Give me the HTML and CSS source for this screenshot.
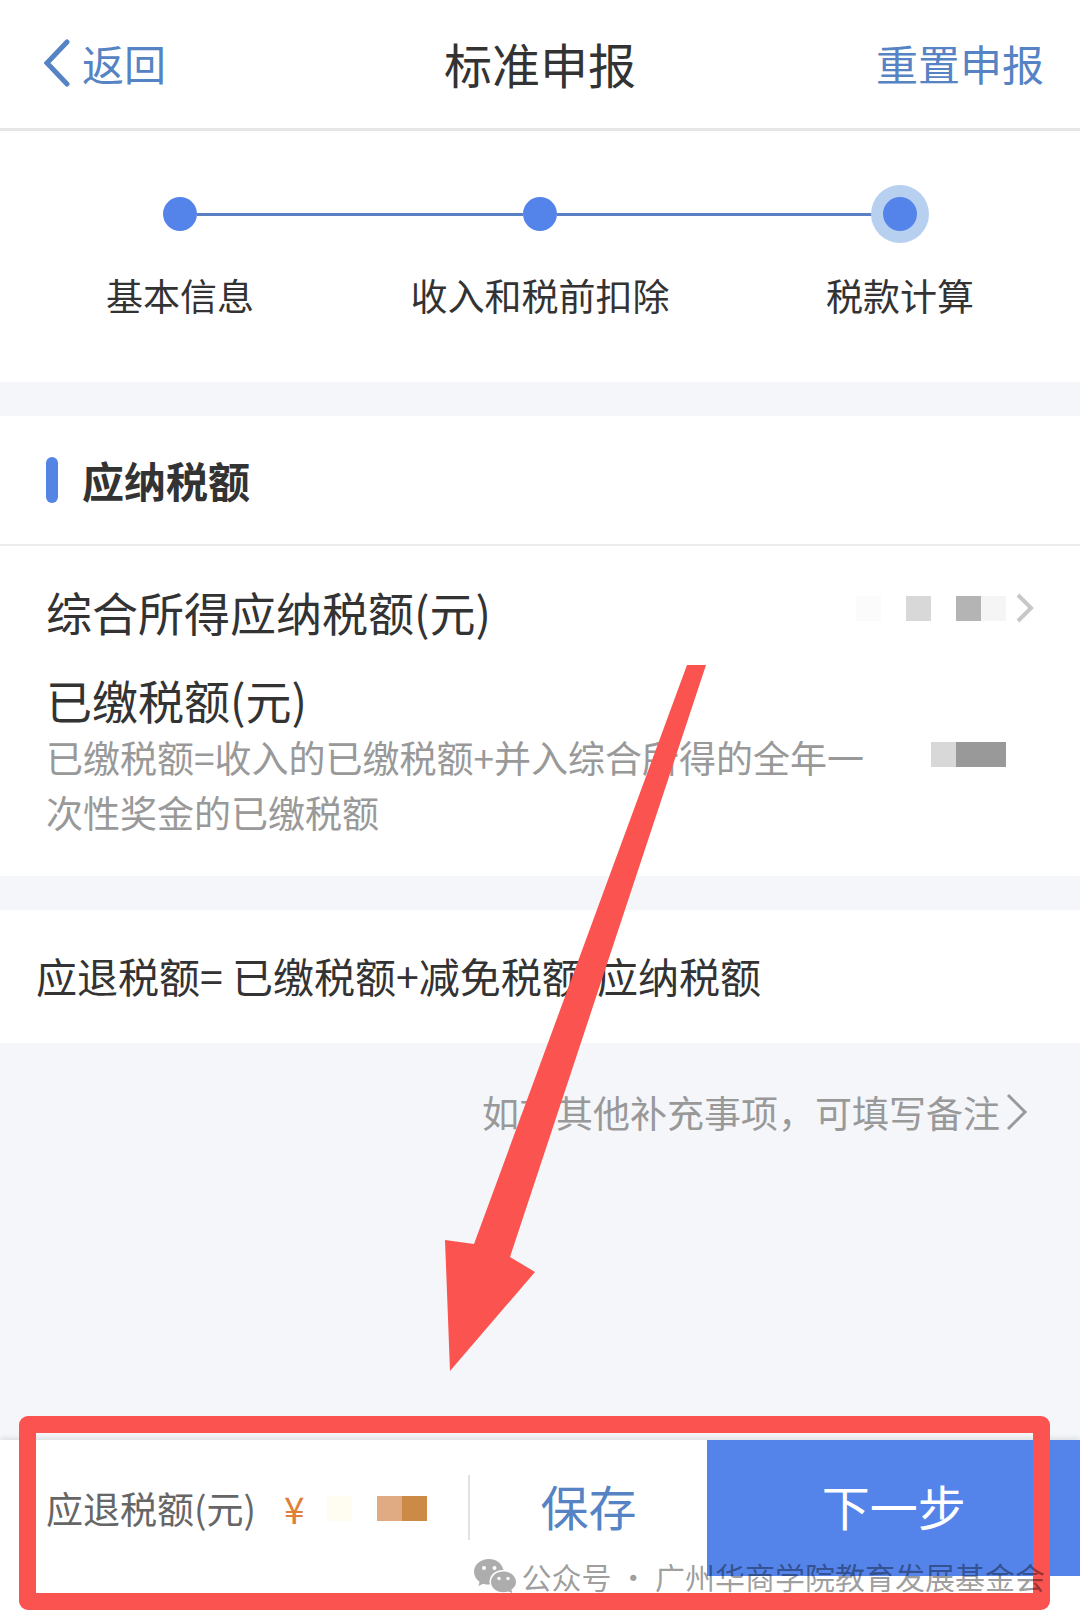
FILE: index.html
```html
<!DOCTYPE html>
<html lang="zh-CN">
<head>
  <meta charset="UTF-8" />
  <meta name="viewport" content="width=device-width, initial-scale=1.0"/>
  <title>标准申报</title>
  <link rel="stylesheet" href="styles.css">
</head>
<body>
<div class="page">
  <header class="topbar">
    <a class="back" href="#">
      <svg class="back-icon" viewBox="0 0 26 48" fill="none" aria-hidden="true"><path d="M23 3 L3 24 L23 45" stroke="currentColor" stroke-width="5" stroke-linecap="round"/></svg>
      返回
    </a>
    <h1>标准申报</h1>
    <a class="reset" href="#">重置申报</a>
  </header>

  <ol class="steps">
    <li><span class="track"><i class="dot"></i></span>基本信息</li>
    <li><span class="track"><i class="dot"></i></span>收入和税前扣除</li>
    <li class="current"><span class="track"><i class="dot"></i></span>税款计算</li>
  </ol>

  <main>
    <section class="card">
      <h2>应纳税额</h2>
      <div class="rows">
        <div class="row">
          <p class="name">综合所得应纳税额(元)</p>
          <span class="value">
            <i class="px g0"></i><i class="px"></i><i class="px g2"></i><i class="px"></i><i class="px g3"></i><i class="px g1"></i>
          </span>
          <svg class="chevron" viewBox="0 0 18 30" fill="none" aria-hidden="true"><path d="M2 2 L15 15 L2 28" stroke="currentColor" stroke-width="4"/></svg>
        </div>
        <div class="row paid">
          <div class="text">
            <p class="name">已缴税额(元)</p>
            <p class="desc">已缴税额=收入的已缴税额+并入综合所得的全年一次性奖金的已缴税额</p>
          </div>
          <span class="value"><i class="px g2"></i><i class="px g4"></i><i class="px g4"></i></span>
        </div>
      </div>
    </section>

    <section class="card formula">
      <p>应退税额= 已缴税额+减免税额-应纳税额</p>
    </section>

    <a class="remark" href="#">
      如有其他补充事项，可填写备注
      <svg class="remark-icon" viewBox="0 0 22 38" fill="none" aria-hidden="true"><path d="M2 2 L19 19 L2 36" stroke="currentColor" stroke-width="3"/></svg>
    </a>
  </main>

  <footer class="bottom">
    <div class="bar">
      <div class="refund">
        <span>应退税额(元)</span>
        <span class="yen">¥</span>
        <span class="amount"><i class="px o0"></i><i class="px"></i><i class="px o1"></i><i class="px o2"></i></span>
      </div>
      <button type="button" class="save">保存</button>
      <button type="button" class="next">下一步</button>
    </div>
    <div class="frame"></div>
    <div class="account">
      <svg class="wechat" viewBox="0 0 42 34" aria-hidden="true">
        <path d="M15 0 C6.500 0 0 5.600 0 12.800 C0 17 2.200 20.500 5.600 22.900 L4.400 27 L9.300 24.700 C11.500 25.400 13.600 25.600 15.900 25.500 C13.900 17.500 20.500 10.700 29.500 11 C28 4.400 22.200 0 15 0 Z"/>
        <path d="M29.500 12.500 C22.300 12.500 17 17.200 17 23 C17 28.900 22.300 33.300 29.500 33.300 C31.200 33.300 32.700 33.100 34.200 32.600 L38.300 34 L37.400 30.700 C40.300 28.800 42 26 42 23 C42 17.200 36.700 12.500 29.500 12.500 Z"/>
        <g fill="#fff"><circle cx="10" cy="9" r="2"/><circle cx="20.500" cy="9" r="2"/><circle cx="25" cy="19.500" r="1.700"/><circle cx="34" cy="19.500" r="1.700"/></g>
      </svg>
      <span>公众号 · 广州华商学院教育发展基金会</span>
    </div>
  </footer>

  <svg class="arrow" viewBox="0 0 261 706" aria-hidden="true"><path d="M242 0 H261 L65 592 L90 607 L5 706 L0 575 L29 579 Z"/></svg>
</div>
</body>
</html>
```

FILE: styles.css
```css
* {
  box-sizing: border-box;
}

body {
  margin: 0;
  font-family: "Noto Sans CJK SC", "Noto Sans", sans-serif;
  color: #333;
  background-color: #f5f6fa;
}

h1, h2, p, ol {
  margin: 0;
  padding: 0;
}

a {
  color: #5583c4;
  text-decoration: none;
}

svg {
  flex: none;
}

.page {
  position: relative;
  display: flex;
  flex-direction: column;
  min-height: 100vh;
}

/* top bar */
.topbar {
  display: grid;
  grid-template-columns: 1fr auto 1fr;
  align-items: center;
  padding: 31px 36px 33px;
  background: #fff;
  border-bottom: 3px solid #e6e6e6;
  font-size: 42px;
  line-height: 64px;
}

.topbar h1 {
  font-size: 48px;
  font-weight: 400;
}

.back {
  display: flex;
  align-items: center;
  gap: 12px;
  padding-left: 8px;
}

.back-icon {
  width: 26px;
  height: 48px;
}

.reset {
  text-align: right;
}

/* steps */
.steps {
  display: grid;
  grid-template-columns: repeat(3, 1fr);
  padding: 54px 0 60px;
  background: #fff;
  list-style: none;
  text-align: center;
  font-size: 37px;
  line-height: 54px;
}

.track {
  display: flex;
  align-items: center;
  height: 58px;
  margin-bottom: 25px;
}

.track::before,
.track::after {
  content: "";
  flex: 1;
  height: 3px;
  background: #5c80c4;
}

.steps li:first-child .track::before,
.steps li:last-child .track::after {
  background: none;
}

.dot {
  position: relative;
  width: 34px;
  height: 34px;
  border-radius: 50%;
  background: #5484ea;
}

.current .dot {
  box-shadow: 0 0 0 12px #b7d0f0;
}

/* cards */
.card {
  margin-top: 34px;
  background: #fff;
}

.card h2 {
  display: flex;
  align-items: center;
  gap: 24px;
  padding: 40px 46px;
  border-bottom: 2px solid #ededed;
  font-size: 42px;
  line-height: 48px;
}

.card h2::before {
  content: "";
  width: 12px;
  height: 46px;
  border-radius: 6px;
  background: #5484e4;
}

.rows {
  display: flex;
  flex-direction: column;
  gap: 26px;
  padding: 34px 46px 36px;
}

.row {
  display: flex;
  align-items: flex-start;
}

.name {
  flex: 1;
  font-size: 46px;
  line-height: 62px;
}

.value,
.amount {
  display: flex;
  align-items: center;
  justify-content: flex-end;
}

.value {
  height: 56px;
}

.px {
  width: 25px;
  height: 25px;
}

.g0 { background: #fbfbfb; }
.g1 { background: #f5f5f5; }
.g2 { background: #d8d8d8; }
.g3 { background: #b4b4b4; }
.g4 { background: #999; }

.chevron {
  width: 18px;
  height: 56px;
  margin-left: 10px;
  color: #c8c8c8;
}

.paid {
  align-items: center;
  padding-right: 28px;
}

.paid .text {
  flex: 1;
}

.paid .value {
  width: 124px;
}

.desc {
  color: #999;
  font-size: 37px;
  line-height: 55px;
}

.formula {
  padding: 37px 36px 39px;
  font-size: 41px;
  line-height: 57px;
}

.remark {
  display: flex;
  align-items: center;
  justify-content: flex-end;
  gap: 6px;
  padding: 42px 52px;
  color: #999;
  font-size: 37px;
  line-height: 54px;
}

.remark-icon {
  width: 22px;
  height: 38px;
}

/* bottom bar */
.bottom {
  position: relative;
  margin-top: auto;
  padding-bottom: 44px;
  background: #fff;
  box-shadow: 0 -2px 5px #dcdfe2;
}

.bar {
  display: flex;
  height: 136px;
}

.refund {
  display: flex;
  flex: none;
  align-items: center;
  width: 43.5%;
  padding-left: 46px;
  border-right: 2px solid;
  border-image: linear-gradient(transparent 26%, #e2e2e2 26%, #e2e2e2 73%, transparent 73%) 1;
  color: #666;
  font-size: 37px;
  white-space: nowrap;
}

.yen {
  margin-left: 28px;
  color: #e08038;
}

.amount {
  margin-left: 22px;
}

.o0 { background: #fffdf2; }
.o1 { background: #e0aa82; }
.o2 { background: #cb8a45; }

.bar button {
  padding: 0 0 6px;
  border: none;
  font-family: inherit;
  font-size: 48px;
  cursor: pointer;
}

.save {
  width: 22%;
  background: #fff;
  color: #5583c4;
}

.next {
  flex: 1;
  background: #5484ea;
  color: #fff;
}

/* marks over the page */
.frame {
  position: absolute;
  top: -24px;
  right: 30px;
  bottom: 10px;
  left: 19px;
  border: 17px solid #fb5350;
  border-radius: 9px;
  pointer-events: none;
}

.account {
  position: absolute;
  right: 35px;
  bottom: 24px;
  display: flex;
  align-items: center;
  gap: 6px;
  color: rgba(0, 0, 0, 0.4);
  font-size: 30px;
  line-height: 40px;
  white-space: nowrap;
}

.wechat {
  width: 42px;
  height: 34px;
  fill: #adadad;
}

.arrow {
  position: absolute;
  top: 665px;
  left: 445px;
  width: 261px;
  height: 706px;
  fill: #fb5350;
  pointer-events: none;
}
```
